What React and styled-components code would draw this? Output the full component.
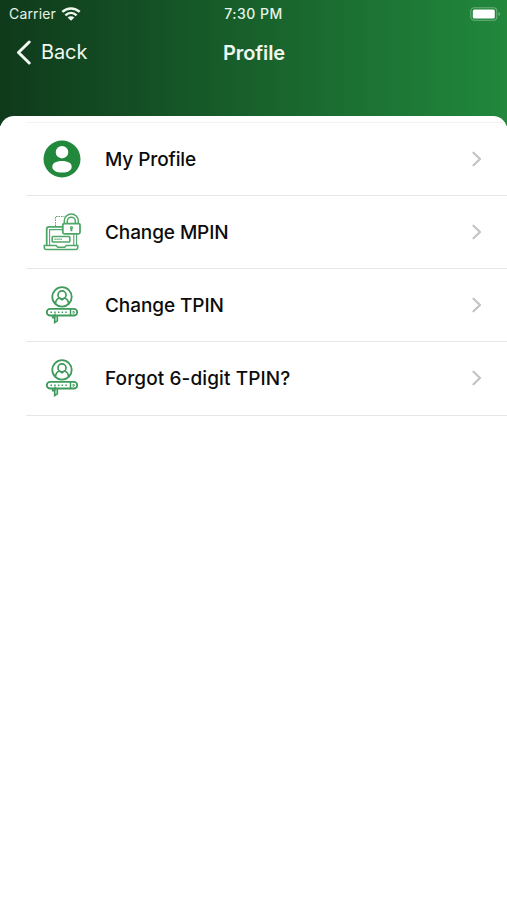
import React from "react"
import styled, { createGlobalStyle } from "styled-components"

const ProfileIcon = () => (
  <Icon width="38" height="38" viewBox="0 0 38 38">
    <circle cx="19" cy="19" r="18.5" fill="#21883c" />
    <circle cx="19" cy="12.2" r="6.2" fill="#fff" />
    <path
      d="M19 21c6 0 9.7 2.2 9.7 5.7S25 32.5 19 32.5 9.3 30.2 9.3 26.7 13 21 19 21z"
      fill="#fff"
    />
  </Icon>
)

const MpinIcon = () => (
  <Icon width="38" height="38" viewBox="0 0 38 38" fill="none" stroke="#4fa768">
    <path d="M12.5 13V3.5h9" strokeWidth="1" strokeDasharray="1.5 1" />
    <path d="M3.7 32V16.2c0-1.6.8-2.4 2.4-2.4H19" strokeWidth="1.8" />
    <path d="M6.6 32V16.6H19M30.8 20.5V32M33.6 20.5V32" strokeWidth="1.1" />
    <path
      d="M1.2 32.5h12l1.5 1.7h7l1.5-1.7h11.6v1.7c0 1.5-.8 2.3-2.3 2.3h-29c-1.5 0-2.3-.8-2.3-2.3z"
      strokeWidth="1.5"
    />
    <rect x="9.2" y="23.5" width="17.6" height="5.5" rx=".8" strokeWidth="1.6" />
    <path d="M11.5 26.3h8" strokeWidth="1.5" strokeDasharray="1.2 .8" />
    <path
      d="M21.3 10.6V8a7 7 0 0 1 14 0v2.6M24.3 10.6V8.2a4 4 0 0 1 8 0v2.4"
      strokeWidth="1.5"
    />
    <rect x="19.8" y="10.6" width="17.2" height="10.2" rx="1.5" strokeWidth="1.8" />
    <path d="M28.4 15v3.2" strokeWidth="1.9" />
    <circle cx="28.4" cy="14.6" r="1" strokeWidth="1.2" />
  </Icon>
)

const TpinIcon = () => (
  <Icon width="38" height="38" viewBox="0 0 38 38" fill="none" stroke="#3f9b5b">
    <circle cx="19" cy="10.9" r="9.7" strokeWidth="1.8" />
    <circle cx="19" cy="8.9" r="4" strokeWidth="1.7" />
    <path d="M12.5 17.4c.3-3.2 2-4.7 4.3-5.3l2.2 1.7 2.2-1.7c2.3.6 4 2.1 4.3 5.3" strokeWidth="1.6" />
    <rect x="3.8" y="22.8" width="30.4" height="6.7" rx="3.35" strokeWidth="1.8" />
    <path d="M27.5 23v6.5" strokeWidth="1.5" />
    <path d="M7.5 26.2h17" strokeWidth="1.5" strokeDasharray="1.5 2.2" />
    <path d="M30 25l2 1.3-2 1.3z" strokeWidth=".8" />
    <path d="M9.7 30v1.7h2v4.7l2.6-1.7V30" strokeWidth="1.7" />
    <path d="M12 27.5v4" strokeWidth="1.5" />
  </Icon>
)

const items = [
  { label: "My Profile", icon: ProfileIcon, spacing: "-0.1px" },
  { label: "Change MPIN", icon: MpinIcon, spacing: "-0.1px" },
  { label: "Change TPIN", icon: TpinIcon, spacing: "-0.08px" },
  { label: "Forgot 6-digit TPIN?", icon: TpinIcon, spacing: "0.1px" },
]

const App = () => {
  return (
    <>
      <GlobalStyle />
      <Screen>
        <StatusBar>
          <Carrier>
            Carrier
            <svg width="20" height="14" viewBox="0 0 20 14" fill="none" stroke="#eef7ef">
              <path d="M1.3 4.9c5-4.6 12.4-4.6 17.4 0" strokeWidth="2.6" />
              <path d="M4.4 8.3c3.3-3 7.9-3 11.2 0" strokeWidth="2.5" />
              <path d="M10 13.7L6.6 10.4c2-1.7 4.8-1.7 6.8 0z" fill="#eef7ef" stroke="none" />
            </svg>
          </Carrier>
          <Clock>7:30 PM</Clock>
          <Battery width="31" height="14" viewBox="0 0 31 14">
            <rect x=".8" y=".8" width="26" height="12.4" rx="3.5" fill="none" stroke="#6bb07b" strokeWidth="1.1" />
            <rect x="2.8" y="2.5" width="22" height="9" rx="1.5" fill="#fff" />
            <path d="M28.5 5v4c1-.3 1.6-1.1 1.6-2s-.6-1.700-1.600-2z" fill="#6bb07b" />
          </Battery>
        </StatusBar>
        <NavBar>
          <BackButton>
            <svg width="16" height="25" viewBox="0 0 16 25" fill="none" stroke="#f0f8f0" strokeWidth="3">
              <path d="M13.2 2L2.5 12.5 13.2 23" strokeLinecap="round" strokeLinejoin="round" />
            </svg>
            <span>Back</span>
          </BackButton>
          <Title>Profile</Title>
        </NavBar>
        <Sheet>
          <List>
            {items.map(({ label, icon: ItemIcon, spacing }) => (
              <Row key={label}>
                <ItemIcon />
                <Label $spacing={spacing}>{label}</Label>
                <svg width="10" height="16" viewBox="0 0 10 16" fill="none" stroke="#c3c3c6" strokeWidth="2.2">
                  <path d="M1.5 1.7L8 8l-6.5 6.3" strokeLinecap="round" strokeLinejoin="round" />
                </svg>
              </Row>
            ))}
          </List>
        </Sheet>
      </Screen>
    </>
  )
}

const GlobalStyle = createGlobalStyle`
  * {
    box-sizing: border-box;
  }
  body {
    margin: 0;
    font-family: Inter, "Liberation Sans", sans-serif;
  }
`

const Screen = styled.div`
  display: flex;
  flex-direction: column;
  height: 900px;
  background: linear-gradient(90deg, #0f3a1b 0%, #21883c 100%) top / 100% 126px no-repeat #fff;
`

const StatusBar = styled.div`
  display: grid;
  grid-template-columns: 1fr auto 1fr;
  align-items: center;
  height: 27px;
  padding: 0 6px 0 9px;
  color: #e6f3e7;
`

const Carrier = styled.div`
  display: flex;
  align-items: center;
  gap: 5px;
  font-size: 14px;
  letter-spacing: 0.15px;
`

const Clock = styled.div`
  margin-left: -3px;
  font-size: 14px;
  font-weight: 500;
  letter-spacing: 0.5px;
`

const Battery = styled.svg`
  justify-self: end;
`

const NavBar = styled.nav`
  display: grid;
  grid-template-columns: 1fr auto 1fr;
  align-items: center;
  height: 50px;
  padding: 0 16px;
  margin-bottom: 38.5px;
  color: #f0f8f0;
`

const BackButton = styled.div`
  display: flex;
  align-items: center;
  gap: 9px;
  font-size: 20px;
  letter-spacing: -0.1px;
`

const Title = styled.h1`
  margin: 0;
  padding: 1px 0 0 1px;
  font-size: 20px;
  font-weight: 600;
  letter-spacing: -0.1px;
`

const Sheet = styled.main`
  flex: 1;
  padding: 6px 0 0 26px;
  overflow: hidden;
  background: #fff;
  border-radius: 14px 14px 0 0;
`

const List = styled.ul`
  margin: 0;
  padding: 0;
  list-style: none;
  border-top: 1px solid #f2f2f2;
`

const Row = styled.li`
  display: flex;
  align-items: center;
  height: 73.25px;
  padding: 0 25px 0 17px;
  border-bottom: 1px solid #e6e6e6;
`

const Icon = styled.svg`
  flex: none;
`

const Label = styled.span`
  flex: 1;
  margin-left: 24px;
  padding-top: 1px;
  font-size: 19px;
  font-weight: 500;
  letter-spacing: ${props => props.$spacing};
  color: #0c0c0c;
`

export default App
